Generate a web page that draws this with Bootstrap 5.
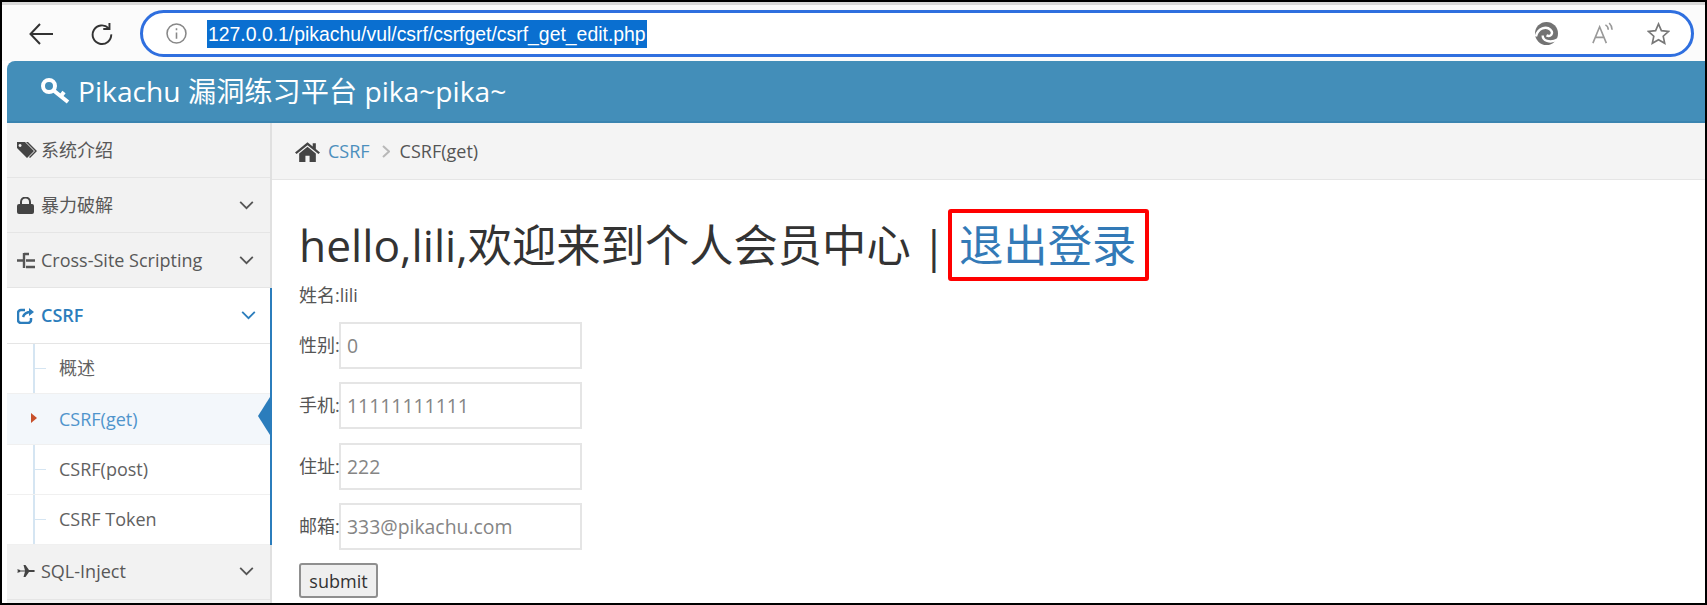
<!DOCTYPE html>
<html lang="zh">
<head>
  <meta charset="UTF-8">
  <title>Pikachu</title>
  <link href="https://cdn.jsdelivr.net/npm/bootstrap@5.3.1/dist/css/bootstrap.min.css" rel="stylesheet">
  <style>
    html, body { height: 605px; overflow: hidden; }
    body { background: #000; font-family: "Open Sans", "Noto Sans CJK SC", sans-serif; font-size: 18px; color: #333; }
    .frame { margin: 2px; height: 601px; background: #fff; display: flex; flex-direction: column; overflow: hidden; }
    .tabstrip { height: 3px; background: #d9d9d9; flex: none; }
    .toolbar { height: 56px; flex: none; padding: 5px 11px 4px 8px; background: #fbfbfb; }
    .tool-btn { width: 61px; }
    .addr-pill { height: 47px; border: 3px solid #2f6fdf; border-radius: 24px; background: #fff; padding: 0 21px 0 23px; margin-left: 8px; }
    .addr-url { font-family: "Liberation Sans", sans-serif; font-size: 19.4px; color: #fff; background: #0a6fd0; padding: 2px 1px; line-height: 24px; margin-left: 20px; }
    .addr-tools { gap: 33px; }
    .page-area { flex: 1; min-height: 0; padding-left: 5px; display: flex; flex-direction: column; }
    .top-head { height: 62px; flex: none; background: #438eb9; border-bottom: 2px solid #3a84b0; border-radius: 8px 0 0 0; color: #fff; font-size: 28.2px; padding-left: 34px; gap: 8px; }
    .side-menu { width: 265px; flex: none; background: #f2f2f2; border-right: 2px solid #e0e0e0; }
    .menu-row { height: 55px; padding: 0 16px 0 10px; border-bottom: 1px solid #e5e5e5; color: #585858; }
    .menu-row.is-last { padding-bottom: 2px; }
    .menu-ico { width: 24px; flex: none; display: flex; align-items: center; }
    .menu-chev { margin-left: auto; }
    .open-group { background: #fff; border-right: 2px solid #2b7dbc; margin-right: -2px; }
    .open-group .menu-row { height: 56px; background: #fff; color: #2b7dbc; font-weight: 600; padding-right: 14px; }
    .sub-menu { position: relative; }
    .sub-menu::before { content: ""; position: absolute; left: 26px; top: 0; bottom: 0; width: 1.500px; background: #d5e5f2; }
    .sub-item { height: 50px; padding-left: 52px; border-bottom: 1px solid #f0f0f0; color: #616161; position: relative; }
    .sub-item::before { content: ""; position: absolute; left: 27px; top: 24px; width: 12px; height: 1px; background: #d5e5f2; }
    .sub-item.is-active { height: 51px; background: #f3f7fb; color: #4f94cc; }
    .sub-item.is-active::before { display: none; }
    .sub-item.is-active::after { content: ""; position: absolute; right: 0; top: 3px; border-style: solid; border-color: transparent #2b7dbc transparent transparent; border-width: 19px 12px 19px 0; }
    .sub-mark { position: absolute; left: 24px; top: 19px; border-style: solid; border-color: transparent transparent transparent #c8502a; border-width: 5px 0 5px 6px; z-index: 1; }
    .crumb-bar { height: 57px; flex: none; background: #f4f4f4; border-bottom: 1px solid #e5e5e5; padding-left: 23px; color: #555; }
    .crumb-link { color: #4c8fbd; margin-left: 8px; text-decoration: none; }
    .crumb-sep { margin: 0 10px 0 12px; }
    .main-pane { padding-left: 27px; }
    .hello-line { font-size: 44.3px; height: 52px; margin-top: 39px; color: #333; white-space: nowrap; }
    .hello-bar { margin-left: 11px; }
    .logout-box { height: 72px; margin-left: 2px; padding: 0 9px 0 7px; border: 4px solid #f00; border-radius: 3px; display: flex; align-items: center; }
    .logout-box a { color: #337ab7; text-decoration: none; }
    .info-line { line-height: 22px; margin: 13px 0 16px; color: #555; }
    .field-row { height: 47px; margin-bottom: 13.3px; }
    .field-row label { width: 40px; white-space: nowrap; color: #555; }
    .field-input { width: 243px; height: 47px; border: 2px solid #e5e5e5; padding: 0 6px; font-size: 19.4px; color: #858585; font-family: "Open Sans", sans-serif; }
    .submit-btn { display: block; height: 35px; width: 79px; margin-top: 1px; padding: 0; background: #efefef; border: 2px solid #8f8f8f; border-radius: 3px; font-size: 18px; color: #333; line-height: 1; }
  </style>
</head>
<body>
  <div class="frame">
    <div class="tabstrip"></div>
    <div class="toolbar d-flex align-items-center">
      <div class="tool-btn d-flex justify-content-center">
        <svg width="24" height="22" viewBox="0 0 24 22" fill="none" stroke="#333" stroke-width="2"><path d="M24 11H2M11 1L1.500 11 11 21"/></svg>
      </div>
      <div class="tool-btn d-flex justify-content-center">
        <svg width="23" height="23" viewBox="0 0 26 26" fill="none" stroke="#333" stroke-width="2.200"><path d="M21 7A10.500 10.500 0 1 0 24 14"/><path d="M22 1v7h-7"/></svg>
      </div>
      <div class="addr-pill flex-grow-1 d-flex align-items-center">
        <svg width="21" height="21" viewBox="0 0 20 20" fill="none" stroke="#888" stroke-width="1.500"><circle cx="10" cy="10" r="9"/><path d="M10 9v6M10 5v2"/></svg>
        <span class="addr-url">127.0.0.1/pikachu/vul/csrf/csrfget/csrf_get_edit.php</span>
        <div class="addr-tools ms-auto d-flex align-items-center">
          <svg width="23" height="23" viewBox="0 0 24 24"><circle cx="12" cy="12" r="12" fill="#737373"/><path d="M1 15C3 6 12 4 16 8s0 8-4 6" fill="none" stroke="#fff" stroke-width="2.500"/><path d="M8 14c0 5 7 9 16 4" fill="none" stroke="#fff" stroke-width="2.500"/></svg>
          <svg width="23" height="23" viewBox="0 0 24 24" fill="none" stroke="#999" stroke-width="1.700"><path d="M2 22L9 5l7 17M5 16h8M15 3c2 1 3 3 3 5M19 1c2 2 3 4 3 7"/></svg>
          <svg width="23" height="23" viewBox="0 0 24 24" fill="none" stroke="#777" stroke-width="1.700"><path d="M12 2l3 7 7.500.8-5.600 5 1.600 7.400L12 18.500 5.500 22.200l1.600-7.400-5.600-5L9 9z"/></svg>
        </div>
      </div>
    </div>
    <div class="page-area">
      <div class="top-head d-flex align-items-center">
        <svg width="29" height="26" viewBox="0 0 29 26" fill="none" stroke="#fff" stroke-width="4"><circle cx="8" cy="8" r="6"/><path d="M12 12l15 12M20 18l3-4"/></svg>
        <span>Pikachu 漏洞练习平台 pika~pika~</span>
      </div>
      <div class="d-flex flex-grow-1" style="min-height:0">
        <nav class="side-menu">
          <div class="menu-row d-flex align-items-center">
            <span class="menu-ico"><svg width="21" height="18" viewBox="0 0 21 18" fill="#444"><path fill-rule="evenodd" d="M0 1h8l9 9-7 7-10-10zM3 3a1.500 1.500 0 1 0 .1 0z"/><path d="M11 1l9 9-7 7-1-1 6-6-9-9z"/></svg></span><span>系统介绍</span>
          </div>
          <div class="menu-row d-flex align-items-center">
            <span class="menu-ico"><svg width="17" height="17" viewBox="0 0 17 17" fill="#444"><rect x="0" y="7" width="17" height="10" rx="2"/><path d="M4 8V5a4.500 4.500 0 0 1 9 0v3" fill="none" stroke="#444" stroke-width="2"/></svg></span><span>暴力破解</span>
            <svg class="menu-chev" width="15" height="9" viewBox="0 0 16 10" fill="none" stroke="#555" stroke-width="2"><path d="M1 1l7 7 7-7"/></svg>
          </div>
          <div class="menu-row d-flex align-items-center">
            <span class="menu-ico"><svg width="19" height="17" viewBox="0 0 19 17" fill="none" stroke="#555" stroke-width="2.400"><path d="M7 1v15M0 8.500h7M7 2h5M9 8.500h9M9 15h9"/></svg></span><span>Cross-Site Scripting</span>
            <svg class="menu-chev" width="15" height="9" viewBox="0 0 16 10" fill="none" stroke="#555" stroke-width="2"><path d="M1 1l7 7 7-7"/></svg>
          </div>
          <div class="open-group">
            <div class="menu-row d-flex align-items-center">
              <span class="menu-ico"><svg width="18" height="17" viewBox="0 0 18 17" fill="none" stroke="#2b7dbc" stroke-width="2.500"><path d="M8 3H4a3 3 0 0 0-3 3v7a3 3 0 0 0 3 3h7a3 3 0 0 0 3-3v-2"/><path d="M6 10c1-3 4-5 8-5"/><path d="M12 1l5 4-5 4z" fill="#2b7dbc" stroke="none"/></svg></span><span>CSRF</span>
              <svg class="menu-chev" width="15" height="9" viewBox="0 0 16 10" fill="none" stroke="#2b7dbc" stroke-width="2"><path d="M1 1l7 7 7-7"/></svg>
            </div>
            <div class="sub-menu">
              <div class="sub-item d-flex align-items-center">概述</div>
              <div class="sub-item is-active d-flex align-items-center"><i class="sub-mark"></i>CSRF(get)</div>
              <div class="sub-item d-flex align-items-center">CSRF(post)</div>
              <div class="sub-item d-flex align-items-center">CSRF Token</div>
            </div>
          </div>
          <div class="menu-row is-last d-flex align-items-center">
            <span class="menu-ico"><svg width="18" height="12" viewBox="0 0 18 12" fill="#444"><path d="M0 4.500h2L3.500 5.500H8L6.500 0h2L12 5h5c1 0 1 2 0 2h-5L8.500 12h-2L8 6.500H3.500L2 7.500H0l1-1.500z"/></svg></span><span>SQL-Inject</span>
            <svg class="menu-chev" width="15" height="9" viewBox="0 0 16 10" fill="none" stroke="#555" stroke-width="2"><path d="M1 1l7 7 7-7"/></svg>
          </div>
        </nav>
        <div class="flex-grow-1">
          <div class="crumb-bar d-flex align-items-center">
            <svg width="25" height="21" viewBox="0 0 24 20" fill="#444"><path d="M12 1L0 11l1.500 1.500L12 4l10.500 8.500L24 11l-4-3.300V2h-3v3.200z"/><path d="M4 12l8-6.500 8 6.500v8h-6v-6h-4v6H4z"/></svg>
            <a class="crumb-link" href="#">CSRF</a>
            <svg class="crumb-sep" width="8" height="13" viewBox="0 0 8 13" fill="none" stroke="#b8b8b8" stroke-width="2"><path d="M1 1l6 5.500-6 5.500"/></svg>
            <span>CSRF(get)</span>
          </div>
          <div class="main-pane">
            <div class="hello-line d-flex align-items-center"><span>hello,lili,欢迎来到个人会员中心</span><span class="hello-bar">|</span><span class="logout-box"><a href="#">退出登录</a></span></div>
            <p class="info-line">姓名:lili</p>
            <form>
              <div class="field-row d-flex align-items-center"><label>性别:</label><input class="field-input" value="0"></div>
              <div class="field-row d-flex align-items-center"><label>手机:</label><input class="field-input" value="11111111111"></div>
              <div class="field-row d-flex align-items-center"><label>住址:</label><input class="field-input" value="222"></div>
              <div class="field-row d-flex align-items-center"><label>邮箱:</label><input class="field-input" value="333@pikachu.com"></div>
              <button type="button" class="submit-btn">submit</button>
            </form>
          </div>
        </div>
      </div>
    </div>
  </div>
  <script src="https://cdn.jsdelivr.net/npm/bootstrap@5.3.1/dist/js/bootstrap.bundle.min.js"></script>
</body>
</html>
